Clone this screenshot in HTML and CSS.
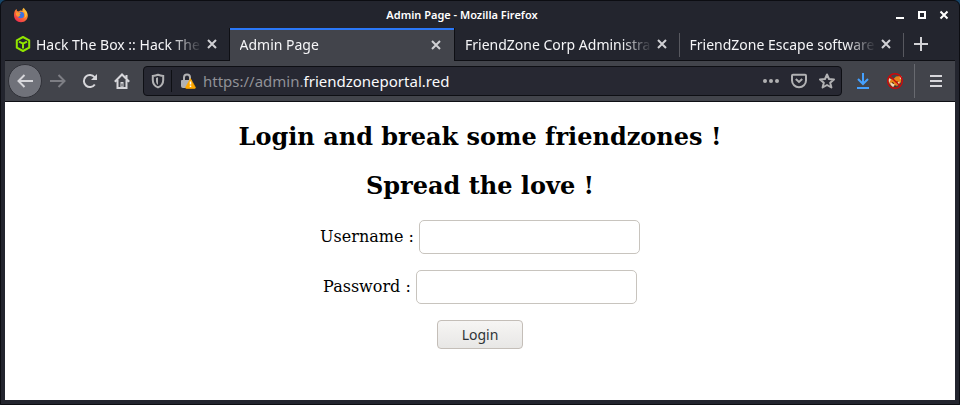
FILE: index.html
```html
<!DOCTYPE html>
<html lang="en">
<head>
<meta charset="utf-8">
<title>Admin Page</title>
<link rel="stylesheet" href="styles.css">
</head>
<body>
<div class="window">
  <header class="titlebar">
    <svg class="app-icon" width="16" height="16" viewBox="0 0 16 16" aria-hidden="true">
      <defs><linearGradient id="flame" x1="1" y1="0" x2="0.3" y2="1"><stop offset="0" stop-color="#ffdf45"/><stop offset=".45" stop-color="#ff8a2a"/><stop offset="1" stop-color="#f02c50"/></linearGradient></defs>
      <path d="M1 8C1 5 2 3 3.500 2L4 4L6 4.500C7 3 9 3.500 9.500 4C9 2.500 9.500 1.500 11 .7C11 2.500 14.800 4 14.800 8.500C14.800 12.500 12 15.200 8 15.200S1 12.500 1 8Z" fill="url(#flame)"/>
      <circle cx="7.800" cy="8" r="3.300" fill="#3c72df"/>
      <path d="M3 5.500L6.500 5.300L8 6.500C6 7.200 6.500 8.500 7.500 8.500L5 10L3 8Z" fill="#ff9830"/>
      <path d="M10 4C13 5 13 9 11 11C14 10 14.800 6 12.500 3.500Z" fill="#ffc43c"/>
    </svg>
    <span class="window-title">Admin Page - Mozilla Firefox</span>
    <div class="window-controls">
      <button aria-label="Minimize"><svg width="10" height="10" viewBox="0 0 10 10"><path d="M1 8h8" stroke="#fff" stroke-width="2"/></svg></button>
      <button aria-label="Maximize"><svg width="10" height="10" viewBox="0 0 10 10"><path d="M2 2h6v6h-6z" fill="none" stroke="#fff" stroke-width="2"/></svg></button>
      <button aria-label="Close"><svg width="10" height="10" viewBox="0 0 10 10"><path d="M1.500 1.500l7 7M8.500 1.500l-7 7" stroke="#fff" stroke-width="2"/></svg></button>
    </div>
  </header>

  <nav class="tabs" aria-label="Tabs">
    <div class="tab">
      <svg class="favicon" width="16" height="16" viewBox="0 0 16 16" fill="none" stroke="#91e500" stroke-width="2" stroke-linejoin="round" aria-hidden="true"><path d="M8 1L14.200 4.300V11.700L8 15L1.800 11.700V4.300ZM4 5.600L8 7.700L12 5.600M8 7.700V12.500"/></svg>
      <a class="tab-label" href="#">Hack The Box :: Hack The</a>
      <button class="tab-close" aria-label="Close tab"><svg width="10" height="10" viewBox="0 0 10 10"><path d="M1 1l8 8M9 1l-8 8"/></svg></button>
    </div>
    <div class="tab active">
      <a class="tab-label" href="#">Admin Page</a>
      <button class="tab-close" aria-label="Close tab"><svg width="10" height="10" viewBox="0 0 10 10"><path d="M1 1l8 8M9 1l-8 8"/></svg></button>
    </div>
    <div class="tab divided">
      <a class="tab-label" href="#">FriendZone Corp Administra</a>
      <button class="tab-close" aria-label="Close tab"><svg width="10" height="10" viewBox="0 0 10 10"><path d="M1 1l8 8M9 1l-8 8"/></svg></button>
    </div>
    <div class="tab divided">
      <a class="tab-label" href="#">FriendZone Escape software</a>
      <button class="tab-close" aria-label="Close tab"><svg width="10" height="10" viewBox="0 0 10 10"><path d="M1 1l8 8M9 1l-8 8"/></svg></button>
    </div>
    <button class="new-tab" aria-label="New tab"><svg width="14" height="14" viewBox="0 0 14 14"><path d="M7 0v14M0 7h14" stroke="#d2d2d6" stroke-width="2"/></svg></button>
  </nav>

  <div class="toolbar">
    <button class="tool back" aria-label="Back"><svg width="16" height="16" viewBox="0 0 16 16"><path d="M16 8H2M7.500 2L1.500 8L7.500 14"/></svg></button>
    <button class="tool forward" aria-label="Forward"><svg width="16" height="16" viewBox="0 0 16 16"><path d="M0 8H14M8.500 2L14.500 8L8.500 14"/></svg></button>
    <button class="tool" aria-label="Reload"><svg width="16" height="16" viewBox="0 0 16 16"><path d="M12.800 11.500A6 6 0 1 1 12.500 4.200"/><path d="M15 1V7H9Z" fill="#d7d7db" stroke="none"/></svg></button>
    <button class="tool" aria-label="Home"><svg width="16" height="16" viewBox="0 0 16 16"><path d="M.8 8.700L8 1.500L15.200 8.700M3.500 7V15H12.500V7M12.500 2V6"/><path d="M6.500 15V9H9.500V15Z" fill="#d7d7db" stroke="none"/><path d="M8 10.500v3" stroke="#42444b" stroke-width="1"/></svg></button>

    <div class="urlbar">
      <button class="url-button shield" aria-label="Tracking protection"><svg width="16" height="16" viewBox="0 0 16 16"><path d="M8 1.800C10 2.500 12 2.800 13.200 2.900V7C13.200 10.800 11 13.300 8 14.400C5 13.300 2.800 10.800 2.800 7V2.900C4 2.800 6 2.500 8 1.800Z"/><path d="M8 4.200L6 5V8C6 10 7 11.200 8 12Z" fill="#b1b1b3" stroke="none"/></svg></button>
      <button class="url-button lock" aria-label="Site information"><svg width="16" height="16" viewBox="0 0 16 16"><path d="M4 7V4.500a3 3 0 0 1 6 0V7"/><path d="M2 7H12V15H3Q1 15 1 13V8Q1 7 2 7Z" fill="#b1b1b3" stroke="none"/><path d="M10.500 5.500L15.500 14.500Q15.500 15.500 14.500 15.500H6.500Q5.500 15.500 5.500 14.500Z" fill="#ffa800" stroke="#ffa800" stroke-width=".6"/><path d="M10.500 8.500v3M10.500 12.500v1.500" stroke="#fff" stroke-width="1.500"/></svg></button>
      <span class="address">https://admin.<strong>friendzoneportal.red</strong></span>
      <button class="url-button" aria-label="Page actions"><svg width="16" height="16" viewBox="0 0 16 16"><g fill="#b1b1b3" stroke="none"><circle cx="2" cy="8" r="2"/><circle cx="8" cy="8" r="2"/><circle cx="14" cy="8" r="2"/></g></svg></button>
      <button class="url-button" aria-label="Save to Pocket"><svg width="16" height="16" viewBox="0 0 16 16"><path d="M2 1.800H14Q15 1.800 15 2.800V7.500A7 6.700 0 0 1 1 7.500V2.800Q1 1.800 2 1.800ZM4.800 6L8 9L11.200 6"/></svg></button>
      <button class="url-button" aria-label="Bookmark"><svg width="16" height="16" viewBox="0 0 16 16"><path d="M8 1.500L10 6L15 6.500L11.200 9.700L12.400 14.500L8 12L3.600 14.500L4.800 9.700L1 6.500L6 6Z" stroke-linejoin="round"/></svg></button>
    </div>

    <button class="tool" aria-label="Downloads"><svg width="16" height="16" viewBox="0 0 16 16"><path class="download" d="M8 0V11M3 6L8 11L13 6M2 15H14"/></svg></button>
    <button class="tool" aria-label="Proxy switcher"><svg width="16" height="16" viewBox="0 0 16 16"><g stroke="none"><path d="M1.500 5L6 6.500L9 3.500L14 3L14 9L11 12.500L5 13.500L2 10Z" fill="#e88318"/><path d="M1 4.500L4 6.500L2 10ZM14.500 3L12.500 5L14.500 7ZM3 9.500L6 10.500L8 12L6 14L4 12ZM9 10L13 8.500L11 12Z" fill="#ecd8bc"/></g><path d="M5 9.500L7 10.500M9 9L11 9M7 13H9" stroke="#402818" stroke-width="1"/><circle cx="8" cy="8" r="7.300" stroke="#d00808" stroke-width="1.400"/><path d="M3 3L13 13" stroke="#d00808" stroke-width="1.400"/></svg></button>
    <button class="tool menu" aria-label="Open menu"><svg width="16" height="16" viewBox="0 0 16 16"><path d="M2 3H14M2 8H14M2 13H14"/></svg></button>
  </div>

  <main class="page">
    <h2>Login and break some friendzones !</h2>
    <h2>Spread the love !</h2>
    <form>
      <p><label for="username">Username :</label> <input id="username" type="text"></p>
      <p><label for="password">Password :</label> <input id="password" type="password"></p>
      <p><button class="login" type="button">Login</button></p>
    </form>
  </main>
</div>
</body>
</html>
```
FILE: styles.css
```css
* {
  box-sizing: border-box;
}

body {
  margin: 0;
  background: #174568;
  font-family: "Noto Sans", sans-serif;
}

button {
  display: flex;
  align-items: center;
  justify-content: center;
  margin: 0;
  padding: 0;
  border: 0;
  background: none;
  font-family: inherit;
}

.window {
  display: flex;
  flex-direction: column;
  min-height: 100vh;
  padding: 0 4px 4px;
  border: 1px solid #0c0d12;
  border-radius: 6px 6px 0 0;
  background: #23252e;
}

/* Title bar */
.titlebar {
  display: flex;
  align-items: center;
  height: 27px;
  padding: 0 6px 0 8px;
}

.window-title {
  flex: 1;
  color: #fff;
  font-size: 11px;
  font-weight: 600;
  text-align: center;
}

.window-controls {
  display: flex;
  gap: 12px;
}

/* Tab strip */
.tabs {
  display: flex;
  height: 33px;
  border-bottom: 1px solid #0e0f14;
}

.tab {
  position: relative;
  display: flex;
  flex: 1;
  align-items: center;
  min-width: 0;
  padding: 0 10px;
}

.tab.active {
  height: 33px;
  border-right: 1px solid #0e0f14;
  background: #42444b;
  box-shadow: -1px 0 #0e0f14, inset 0 2px #2b78f8;
}

.tab.divided::after {
  position: absolute;
  top: 5px;
  right: 0;
  width: 1px;
  height: 24px;
  background: #57585f;
  content: "";
}

.favicon {
  flex: none;
  margin-right: 5px;
}

.tab-label {
  flex: 1;
  overflow: hidden;
  color: #f5f5f7;
  font-size: 14px;
  text-decoration: none;
  white-space: nowrap;
  mask-image: linear-gradient(to left, transparent, #000 30px);
}

.tab-close {
  flex: none;
  width: 16px;
  height: 16px;
  margin-left: 2px;
}

.tab-close path {
  stroke: #d0d0d4;
  stroke-width: 2;
}

.new-tab {
  width: 34px;
  margin-right: 17px;
}

/* Navigation toolbar */
.toolbar {
  display: flex;
  align-items: center;
  height: 41px;
  padding: 0 3px;
  border-bottom: 1px solid #0e0f14;
  background: #42444b;
}

.toolbar svg {
  fill: none;
  stroke: #d7d7db;
  stroke-width: 2;
}

.toolbar .download {
  stroke: #45a1ff;
}

.tool {
  flex: none;
  width: 32px;
  height: 32px;
}

.tool.back {
  width: 34px;
  height: 34px;
  border: 1px solid #303138;
  border-radius: 50%;
  background: #70727a;
}

.toolbar .forward svg {
  stroke: #7d7e84;
}

.tool.menu {
  box-sizing: content-box;
  height: 34px;
  margin-left: 3px;
  padding-left: 5px;
  border-left: 1px solid #686a70;
}

.urlbar {
  display: flex;
  flex: 1;
  align-items: center;
  min-width: 0;
  height: 30px;
  margin: 0 5px;
  border: 1px solid #0e0f14;
  border-radius: 4px;
  background: #272832;
}

.toolbar .urlbar svg {
  stroke: #b1b1b3;
}

.url-button {
  flex: none;
  width: 28px;
  height: 22px;
}

.shield {
  border-right: 1px solid #0e0f14;
}

.lock {
  width: 31px;
}

.address {
  flex: 1;
  overflow: hidden;
  color: #909197;
  font-size: 15px;
  white-space: nowrap;
}

.address strong {
  color: #fafafc;
  font-weight: 400;
}

/* Page content */
.page {
  flex: 1;
  background: #fff;
  color: #000;
  font-family: "DejaVu Serif", serif;
  font-size: 16px;
  text-align: center;
}

.page h2 {
  margin: 20px 0;
  font-size: 24px;
  line-height: 29px;
}

.page p {
  margin: 16px 0;
}

.page input {
  width: 221px;
  height: 34px;
  padding: 4px 8px;
  border: 1px solid #c8c4be;
  border-radius: 5px;
  background: #fff;
  font-family: "Noto Sans", sans-serif;
  font-size: 15px;
  vertical-align: middle;
}

.login {
  width: 86px;
  height: 29px;
  margin: 0 auto;
  border: 1px solid #c4beb8;
  border-radius: 4px;
  background: linear-gradient(#f6f5f4, #e8e7e5);
  color: #2e3436;
  font-family: "Noto Sans", sans-serif;
  font-size: 14px;
}
```
